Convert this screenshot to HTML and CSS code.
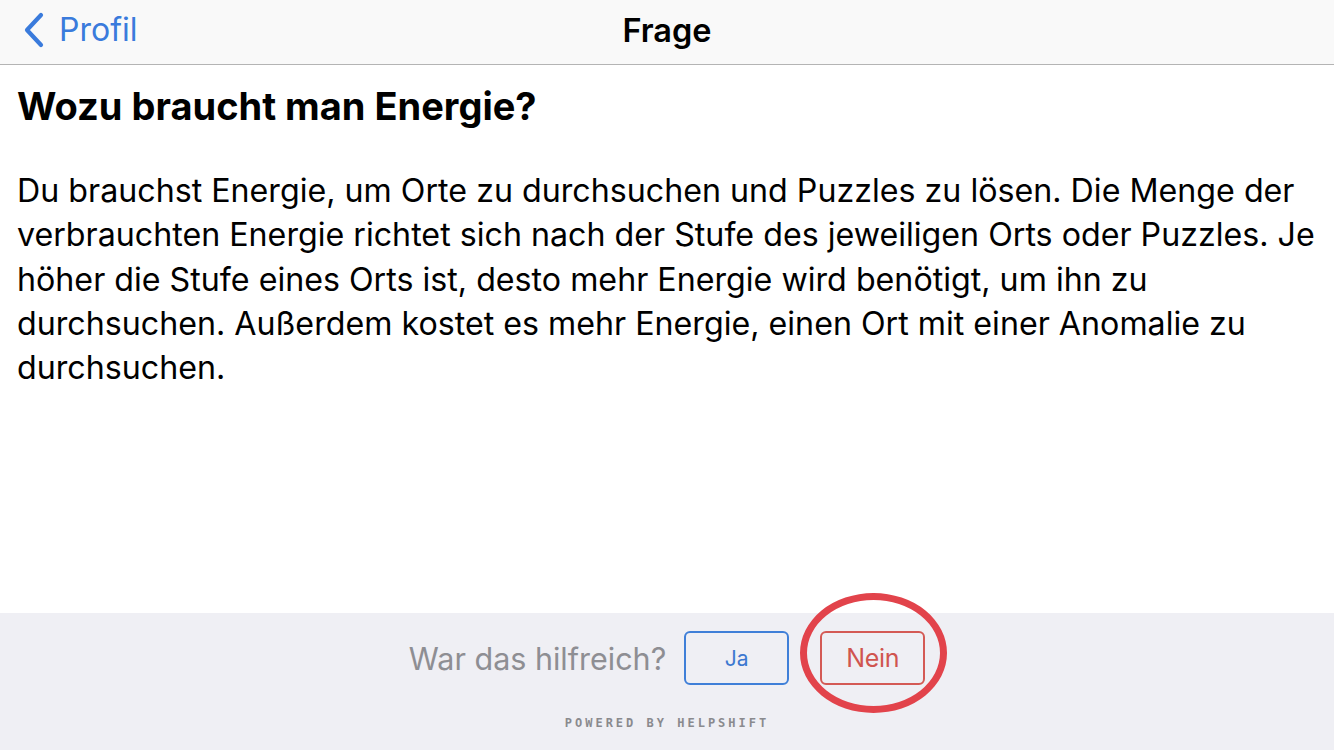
FILE: index.html
```html
<!DOCTYPE html>
<html lang="de">
<head>
<meta charset="utf-8">
<title>Frage</title>
<link rel="stylesheet" href="styles.css">
</head>
<body>
<div class="screen">
  <header class="navbar">
    <a class="back" href="#">
      <svg class="chevron" width="22" height="36" viewBox="0 0 22 36" aria-hidden="true">
        <path d="M18 3 L4 18 L18 33" fill="none" stroke="#3a7bdc" stroke-width="4.2" stroke-linecap="round" stroke-linejoin="round"/>
      </svg>
      <span>Profil</span>
    </a>
    <h1 class="nav-title">Frage</h1>
  </header>
  <main class="content">
    <h2 class="question">Wozu braucht man Energie?</h2>
    <p class="answer">Du brauchst Energie, um Orte zu durchsuchen und Puzzles zu lösen. Die Menge der verbrauchten Energie richtet sich nach der Stufe des jeweiligen Orts oder Puzzles. Je höher die Stufe eines Orts ist, desto mehr Energie wird benötigt, um ihn zu durchsuchen. Außerdem kostet es mehr Energie, einen Ort mit einer Anomalie zu durchsuchen.</p>
  </main>
  <footer class="feedback">
    <div class="feedback-row">
      <span class="feedback-label">War das hilfreich?</span>
      <button class="btn btn-yes">Ja</button>
      <span class="highlight">
        <button class="btn btn-no">Nein</button>
      </span>
    </div>
    <div class="powered">POWERED BY HELPSHIFT</div>
  </footer>
</div>
</body>
</html>
```
FILE: styles.css
```css
*, *::before, *::after { box-sizing: border-box; }
html, body { margin: 0; padding: 0; }
body {
  width: 1334px;
  height: 750px;
  overflow: hidden;
  background: #ffffff;
  font-family: Inter, Roboto, sans-serif;
  color: #000;
}
.screen {
  display: flex;
  flex-direction: column;
  height: 750px;
}
.navbar {
  position: relative;
  height: 65px;
  flex: none;
  background: #f9f9f9;
  border-bottom: 1px solid #b4b4b4;
  display: flex;
  align-items: center;
  justify-content: center;
}
.back {
  position: absolute;
  left: 23px;
  top: 12px;
  display: flex;
  align-items: center;
  gap: 14px;
  color: #3a7bdc;
  text-decoration: none;
  font-size: 32px;
  line-height: 36px;
}
.chevron { display: block; }
.nav-title {
  margin: 0;
  font-size: 32.5px;
  font-weight: 600;
  line-height: 36px;
  margin-top: -2px;
}
.content {
  flex: 1;
  padding: 17px 17px 0 17px;
}
.question {
  margin: 0;
  font-size: 38px;
  font-weight: 700;
  line-height: 48px;
}
.answer {
  margin: 39px 0 0 0;
  font-size: 32.2px;
  line-height: 44.3px;
  width: 1308px;
}
.feedback {
  flex: none;
  height: 137px;
  background: #efeff4;
  display: flex;
  flex-direction: column;
  align-items: center;
}
.feedback-row {
  display: flex;
  align-items: center;
  margin-top: 18px;
}
.feedback-label {
  font-size: 30.5px;
  color: #8e8e93;
  margin-right: 18px;
}
.btn {
  font-family: Inter, Roboto, sans-serif;
  background: transparent;
  width: 105px;
  height: 54px;
  border-radius: 6px;
  border: 2px solid;
  padding: 0;
}
.btn-yes { border-color: #3f7fd8; color: #3c78d0; font-size: 21px; }
.btn-no { border-color: #d45a55; color: #d0554f; font-size: 25px; letter-spacing: -0.3px; }
.highlight {
  position: relative;
  margin-left: 31px;
  display: inline-flex;
}
.highlight::after {
  content: "";
  position: absolute;
  left: -20px;
  top: -38px;
  width: 147px;
  height: 120px;
  border: 7px solid #e2434b;
  border-radius: 50%;
  pointer-events: none;
}
.powered {
  margin-top: 31px;
  font-family: "DejaVu Sans Mono", monospace;
  font-size: 12px;
  font-weight: 700;
  letter-spacing: 3px;
  color: #8a8a8e;
}
```
